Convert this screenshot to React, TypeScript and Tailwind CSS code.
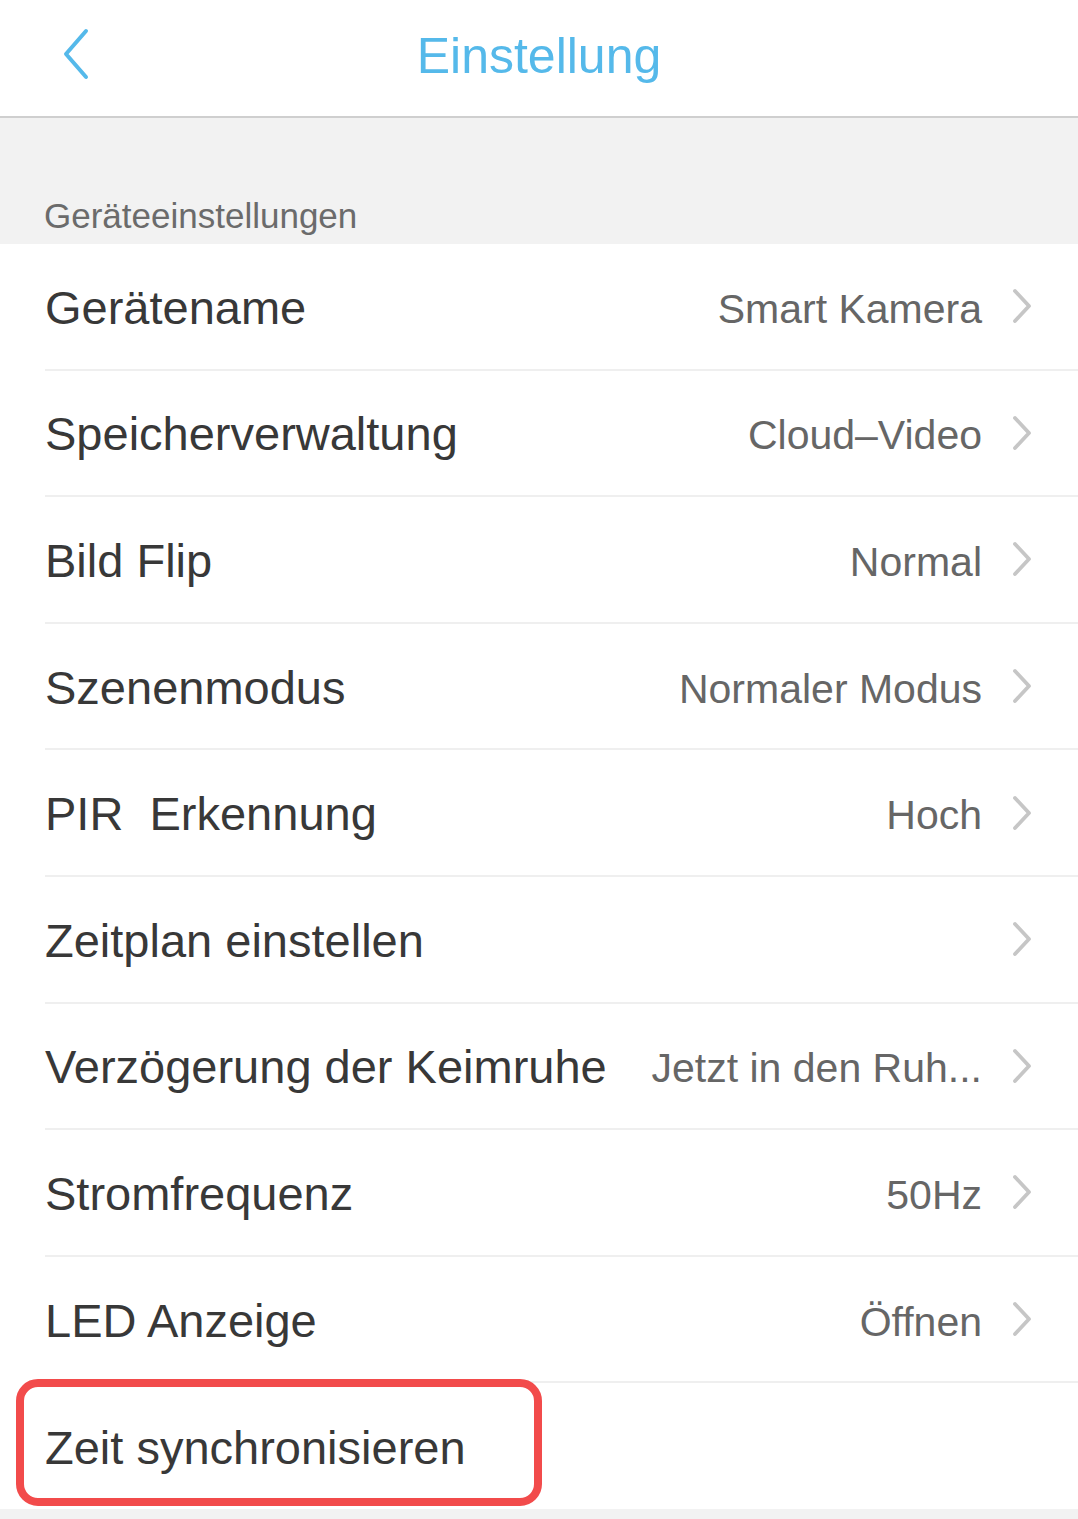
import React from 'react';

const rows: { label: string; value?: string }[] = [
  { label: 'Gerätename', value: 'Smart Kamera' },
  { label: 'Speicherverwaltung', value: 'Cloud–Video' },
  { label: 'Bild Flip', value: 'Normal' },
  { label: 'Szenenmodus', value: 'Normaler Modus' },
  { label: 'PIR\u00a0\u00a0Erkennung', value: 'Hoch' },
  { label: 'Zeitplan einstellen' },
  { label: 'Verzögerung der Keimruhe', value: 'Jetzt in den Ruh...' },
  { label: 'Stromfrequenz', value: '50Hz' },
  { label: 'LED Anzeige', value: 'Öffnen' },
];

function Chevron() {
  return (
    <svg width="22" height="38" viewBox="0 0 22 38" fill="none" className="shrink-0">
      <path d="M5 4 L19 19 L5 34" stroke="#c6c6c6" strokeWidth="3.8" strokeLinecap="round" strokeLinejoin="round" />
    </svg>
  );
}

export default function App() {
  return (
    <div className="w-[1078px] h-[1519px] bg-[#f2f2f2] overflow-hidden font-['Liberation_Sans',Arial,sans-serif]">
      {/* Header */}
      <div className="h-[118px] bg-white border-b-2 border-[#cfcfcf] flex items-center relative">
        <div className="absolute left-[60px] top-[28px]">
          <svg width="32" height="52" viewBox="0 0 32 52" fill="none">
            <path d="M26 3 L6 26 L26 49" stroke="#55b9ea" strokeWidth="4" strokeLinecap="round" strokeLinejoin="round" />
          </svg>
        </div>
        <h1 className="w-full text-center text-[50px] text-[#55b9ea] leading-none pb-[4px]">Einstellung</h1>
      </div>

      {/* Section title */}
      <div className="h-[126px] flex items-end pl-[44px] pb-[11px]">
        <span className="text-[35px] text-[#6b6b6b] leading-none">Geräteeinstellungen</span>
      </div>

      {/* Rows */}
      <div className="bg-white">
        {rows.map((r) => (
          <div key={r.label} className="pl-[45px]">
            <div className="h-[126.6px] flex items-center border-b-2 border-[#efefef] pr-[46px]">
              <span className="text-[47px] text-[#383838] leading-none pt-[2px] whitespace-nowrap">{r.label}</span>
              <div className="flex-1" />
              {r.value && (
                <span className="text-[41px] text-[#666] leading-none pt-[6px] mr-[28px] whitespace-nowrap">{r.value}</span>
              )}
              <Chevron />
            </div>
          </div>
        ))}
        <div className="pl-[45px] relative">
          <div className="h-[126px] flex items-center">
            <span className="text-[47px] text-[#383838] leading-none pt-[2px]">Zeit synchronisieren</span>
          </div>
          <div className="absolute left-[16px] top-[-4px] w-[526px] h-[127px] border-[8px] border-[#f24b4b] rounded-[22px]" />
        </div>
      </div>
    </div>
  );
}
